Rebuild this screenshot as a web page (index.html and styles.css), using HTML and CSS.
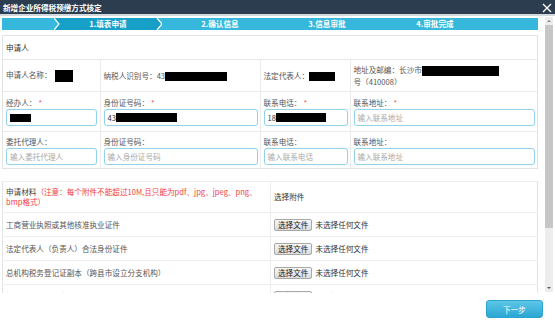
FILE: index.html
```html
<!DOCTYPE html>
<html lang="zh-CN">
<head>
  <meta charset="UTF-8" />
  <meta name="viewport" content="width=device-width, initial-scale=1.0"/>
  <title>新增企业所得税预缴方式核定</title>
  <link rel="stylesheet" href="styles.css">
</head>
<body>
<div class="dialog">
  <div class="titlebar">
    <span class="title">新增企业所得税预缴方式核定</span>
    <svg class="close" width="10" height="10" viewBox="0 0 10 10">
      <path d="M1 1 L9 9 M9 1 L1 9" stroke="#fff" stroke-width="1.3" fill="none"/>
    </svg>
  </div>

  <div class="main">
    <div class="content">
      <!-- steps -->
      <div class="steps">
        <div class="step-lead"></div>
        <svg class="chev" width="6" height="12" viewBox="0 0 6 12">
          <rect width="6" height="12" fill="#35b8dc"/>
          <polygon points="0,0 6,0 6,12 0,12 5,6" fill="#16a0c8"/>
          <polyline points="0,0 5,6 0,12" stroke="#fff" stroke-width="1.2" fill="none"/>
        </svg>
        <div class="step active">1.填表申请</div>
        <svg class="chev" width="6" height="12" viewBox="0 0 6 12">
          <rect width="6" height="12" fill="#35b8dc"/>
          <polygon points="0,0 1,0 6,6 1,12 0,12" fill="#16a0c8"/>
          <polyline points="1,0 6,6 1,12" stroke="#fff" stroke-width="1.2" fill="none"/>
        </svg>
        <div class="step s2">2.确认信息</div>
        <div class="step s3">3.信息审批</div>
        <div class="step s4">4.审批完成</div>
      </div>

      <!-- applicant -->
      <div class="panel">
        <div class="panel-head">申请人</div>
        <table class="info">
          <colgroup>
            <col class="c1"><col class="c2"><col class="c3"><col class="c4">
          </colgroup>
          <tr class="row-info">
            <td>申请人名称：<span class="redact r-name"></span></td>
            <td>纳税人识别号：43<span class="redact r-tax"></span></td>
            <td>法定代表人：<span class="redact r-rep"></span></td>
            <td class="addr">地址及邮编：长沙市<span class="redact r-addr"></span><br>号（410008）</td>
          </tr>
          <tr class="row-input">
            <td><div class="lbl">经办人：<span class="req">*</span></div>
              <div class="field"><span class="redact r-in1"></span></div></td>
            <td><div class="lbl">身份证号码：<span class="req">*</span></div>
              <div class="field">43<span class="redact r-in2"></span></div></td>
            <td><div class="lbl">联系电话：<span class="req">*</span></div>
              <div class="field">18<span class="redact r-in3"></span></div></td>
            <td><div class="lbl">联系地址：<span class="req">*</span></div>
              <div class="field ph">输入联系地址</div></td>
          </tr>
          <tr class="row-input row-agent">
            <td><div class="lbl">委托代理人：</div>
              <div class="field ph">输入委托代理人</div></td>
            <td><div class="lbl">身份证号码：</div>
              <div class="field ph">输入身份证号码</div></td>
            <td><div class="lbl">联系电话：</div>
              <div class="field ph">输入联系电话</div></td>
            <td><div class="lbl">联系地址：</div>
              <div class="field ph">输入联系地址</div></td>
          </tr>
        </table>
      </div>

      <!-- materials -->
      <table class="files">
        <colgroup><col class="f1"><col class="f2"></colgroup>
        <tr class="files-head">
          <td>申请材料<span class="note">（注意：每个附件不能超过10M,且只能为pdf、jpg、jpeg、png、bmp格式）</span></td>
          <td>选择附件</td>
        </tr>
        <tr>
          <td>工商营业执照或其他核准执业证件</td>
          <td><button class="pick">选择文件</button><span class="none">未选择任何文件</span></td>
        </tr>
        <tr>
          <td>法定代表人（负责人）合法身份证件</td>
          <td><button class="pick">选择文件</button><span class="none">未选择任何文件</span></td>
        </tr>
        <tr>
          <td>总机构税务登记证副本（跨县市设立分支机构）</td>
          <td><button class="pick">选择文件</button><span class="none">未选择任何文件</span></td>
        </tr>
        <tr>
          <td>按照章程或者董事会的实际利润额预缴方式核定的证明材料 <span class="req">*</span></td>
          <td><button class="pick">选择文件</button><span class="none">未选择任何文件</span></td>
        </tr>
      </table>
    </div>

    <div class="scrollbar">
      <div class="sb-arrow up"></div>
      <div class="sb-thumb"></div>
      <div class="sb-track"></div>
      <div class="sb-arrow down"></div>
    </div>
  </div>

  <div class="footer">
    <button class="next">下一步</button>
  </div>
</div>
</body>
</html>
```

FILE: styles.css
```css
body { margin: 0; font-family: "Noto Sans CJK SC", "Noto Sans", sans-serif; font-size: 7.6px; color: #555; background: #fff; }
.dialog { width: 555px; height: 324px; display: flex; flex-direction: column; overflow: hidden; }

.titlebar { height: 14px; background: #2c3d4f; border-bottom: 2px solid #d3d8dd; display: flex; justify-content: space-between; align-items: center; padding: 0 3px 0 3px; }
.title { color: #fff; font-weight: bold; }
.close { margin-top: 1px; }

.main { height: 277px; display: flex; overflow: hidden; }
.content { width: 536px; margin-left: 2px; padding-top: 2px; overflow: hidden; }

.steps { height: 12px; display: flex; background: #35b8dc; color: #fff; font-weight: bold; line-height: 12px; }
.step-lead { width: 52px; }
.step { text-align: center; }
.step.active { width: 96px; background: #16a0c8; }
.s2 { width: 116px; }
.s3 { width: 98px; }
.s4 { width: 118px; }

.panel { margin-top: 5px; border: 1px solid #e3e3e3; }
.panel-head { height: 23px; line-height: 23px; padding-left: 3px; color: #333; border-bottom: 1px solid #e8e8e8; }

table { border-collapse: collapse; table-layout: fixed; width: 100%; }
td { border: 1px solid #ebebeb; padding: 0 2px 0 3px; vertical-align: middle; }
.info tr td:first-child { border-left: none; }
.info tr td:last-child { border-right: none; }
.info tr:last-child td { border-bottom: none; }
.info tr:first-child td { border-top: none; }
.c1 { width: 97px; }
.c2 { width: 160px; }
.c3 { width: 90px; }

.row-info td { height: 31px; }
.addr { line-height: 11px; }
.row-input td { height: 39px; vertical-align: top; }
.row-agent td { height: 36px; }
.lbl { margin-top: 5px; height: 11px; line-height: 11px; }
.row-agent .lbl { margin-top: 4px; }
.req { color: #f24a4a; margin-left: 2px; }
.field { margin-top: 1px; height: 15px; line-height: 15px; border: 1px solid #93d3ea; border-radius: 3px; padding-left: 3px; color: #333; box-shadow: 0 0 1px #c6e9f5; display: flex; align-items: center; }
.field.ph { color: #aaa; }
.row-input td:first-child .field { margin-right: 1px; }

.redact { display: inline-block; background: #000; vertical-align: middle; }
.r-name { width: 18px; height: 12px; margin-left: 3px; }
.r-tax { width: 62px; height: 9px; }
.r-rep { width: 26px; height: 9px; }
.r-addr { width: 77px; height: 10px; }
.r-in1 { width: 21px; height: 8px; }
.r-in2 { width: 61px; height: 9px; }
.r-in3 { width: 50px; height: 9px; }

.files { margin-top: 12px; border: 1px solid #e3e3e3; }
.f1 { width: 268px; }
.files td { height: 23px; border-color: #ededed; }
.files td:first-child { border-left: none; padding-left: 3px; }
.files td:last-child { border-right: none; }
.files-head td { height: 30px; line-height: 10px; color: #444; }
.files-head td:last-child { color: #333; }
.note { color: #f23c3c; }

.pick { font: inherit; color: #222; height: 12px; line-height: 10px; padding: 0 3px; border: 1px solid #a8a8a8; border-radius: 2px; background: linear-gradient(#f8f8f8, #dcdcdc); vertical-align: middle; }
.none { color: #333; margin-left: 3px; vertical-align: middle; }

.scrollbar { width: 8px; margin-left: 7px; margin-top: 1px; height: 275px; background: #ededed; display: flex; flex-direction: column; }
.sb-arrow { height: 8px; position: relative; }
.sb-arrow::after { content: ""; position: absolute; left: 2px; border-left: 2px solid transparent; border-right: 2px solid transparent; }
.sb-arrow.up::after { top: 3px; border-bottom: 2px solid #888; }
.sb-arrow.down::after { top: 3px; border-top: 2px solid #555; }
.sb-thumb { height: 203px; background: #c6c6c6; }
.sb-track { flex: 1; }

.footer { flex: 1; display: flex; justify-content: flex-end; align-items: flex-start; padding: 7px 12px 0 0; }
.next { font: inherit; width: 57px; height: 18px; color: #fff; border: 1px solid #2ba3cf; border-radius: 3px; background: linear-gradient(#5dc6e7, #2aa7d3); }
```
